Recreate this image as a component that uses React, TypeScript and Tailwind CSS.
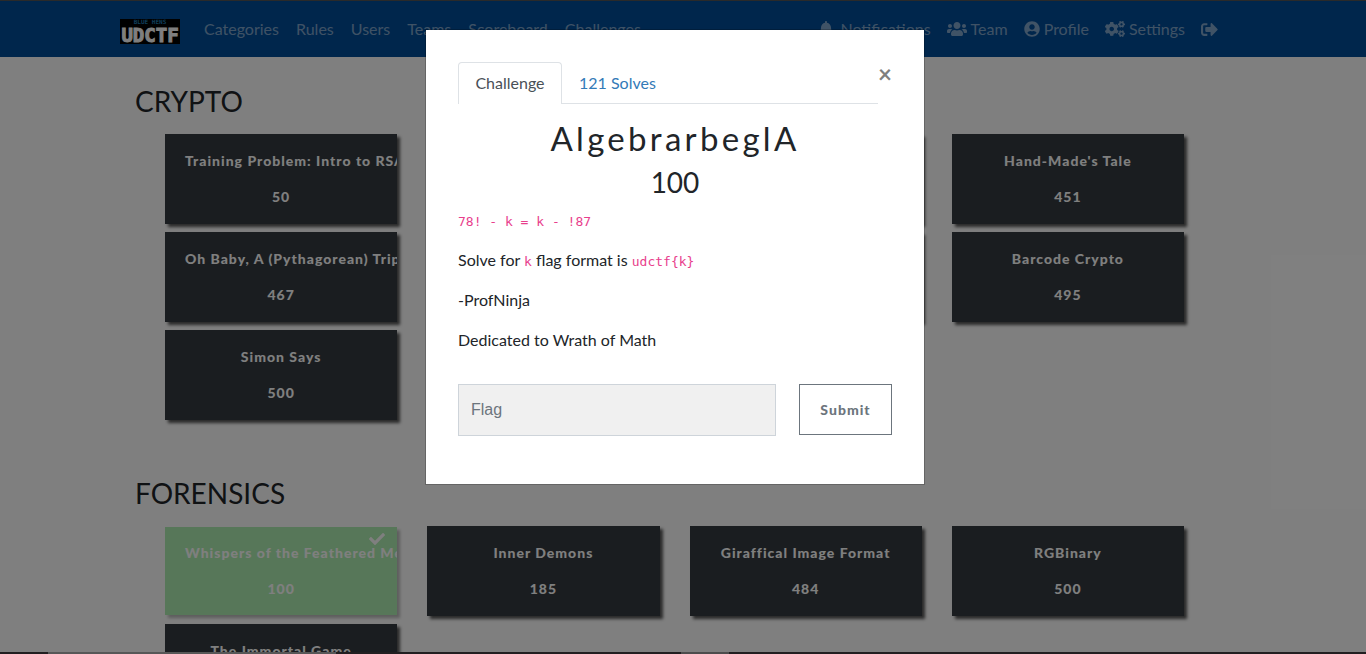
import { FaBell, FaCheck, FaCogs, FaSignOutAlt, FaUserCircle, FaUsers } from "react-icons/fa";

type Challenge = { name?: string; value?: number; solved?: boolean; blank?: boolean };

const crypto: Challenge[] = [
  { name: "Training Problem: Intro to RSA", value: 50 },
  { blank: true },
  { blank: true },
  { name: "Hand-Made's Tale", value: 451 },
  { name: "Oh Baby, A (Pythagorean) Triplet", value: 467 },
  { blank: true },
  { blank: true },
  { name: "Barcode Crypto", value: 495 },
  { name: "Simon Says", value: 500 },
];

const forensics: Challenge[] = [
  { name: "Whispers of the Feathered Messenger", value: 100, solved: true },
  { name: "Inner Demons", value: 185 },
  { name: "Giraffical Image Format", value: 484 },
  { name: "RGBinary", value: 500 },
  { name: "The Immortal Game", value: 500 },
];

function Card({ name, value, solved, blank }: Challenge) {
  if (blank) {
    return <div aria-hidden="true" className="h-[90px] bg-[#343a40] shadow-[3px_3px_3px_#555]" />;
  }
  return (
    <button
      type="button"
      className={
        solved
          ? "relative my-px h-[88px] overflow-hidden bg-[#afefb2] px-5 text-center text-sm font-black tracking-[1px] text-white shadow-[3px_3px_3px_#bbb]"
          : "relative h-[90px] overflow-hidden bg-[#343a40] px-5 text-center text-sm font-black tracking-[1px] text-white shadow-[3px_3px_3px_#555]"
      }
    >
      {solved && <FaCheck className="absolute top-1 right-3 size-4" />}
      <p className="mb-4 whitespace-nowrap">{name}</p>
      <p>{value}</p>
    </button>
  );
}

function Category({ title, items }: { title: string; items: Challenge[] }) {
  return (
    <section className="px-[15px]">
      <h3 className="mb-4 text-[28px] leading-[34px] text-[#212529]">{title}</h3>
      <div className="grid grid-cols-4 gap-x-[30px] gap-y-2 pr-[31px] pl-[30px]">
        {items.map((c, i) => (
          <Card key={i} {...c} />
        ))}
      </div>
    </section>
  );
}

const link = "flex items-center gap-1 whitespace-nowrap";
const code = "font-['DejaVu_Sans_Mono',monospace] text-[13px] leading-none text-[#e83e8c]";

export default function App() {
  return (
    <div className="relative h-screen overflow-hidden bg-white font-['Lato',sans-serif] text-base text-[#212529]">
      <div className="pr-4">
        <header className="-mr-4 border-t border-[#555] bg-[#004c98] pr-4">
          <nav className="mx-auto flex h-14 max-w-[1140px] items-center px-[15px] text-white/50">
            <a href="#home" className="mt-1 mr-6">
              <svg width="60" height="25" viewBox="0 0 60 25" role="img" aria-label="Blue Hens UDCTF">
                <rect width="60" height="25" fill="#000" />
                <text x="30" y="5" textAnchor="middle" fontSize="6" fontWeight="700" fontFamily="DejaVu Sans Mono" fill="#1f7ab0">BLUE HENS</text>
                <text x="30" y="23" textAnchor="middle" fontSize="19" fontWeight="700" fontFamily="DejaVu Sans Mono" fill="#fff" stroke="#fff" strokeWidth="1">UDCTF</text>
              </svg>
            </a>
            <div className="flex gap-[17px]">
              <a href="#categories" className={link}>Categories</a>
              <a href="#rules" className={link}>Rules</a>
              <a href="#users" className={link}>Users</a>
              <a href="#teams" className={link}>Teams</a>
              <a href="#scoreboard" className={link}>Scoreboard</a>
              <a href="#challenges" className={link}>Challenges</a>
            </div>
            <div className="mr-3 ml-auto flex gap-4">
              <a href="#notifications" className={link}><FaBell className="mr-0.5" />Notifications</a>
              <a href="#team" className={link}><FaUsers className="size-5" />Team</a>
              <a href="#profile" className={link}><FaUserCircle />Profile</a>
              <a href="#settings" className={link}><FaCogs className="size-5" />Settings</a>
              <a href="#logout" aria-label="Log out" className={link}><FaSignOutAlt className="size-[17px]" /></a>
            </div>
          </nav>
        </header>
        <main className="mx-auto flex max-w-[1140px] flex-col gap-14 px-[15px] pt-[27px]">
          <Category title="CRYPTO" items={crypto} />
          <Category title="FORENSICS" items={forensics} />
        </main>
      </div>

      <div className="absolute inset-0 flex items-start justify-center bg-black/50 pt-[29px] pr-4">
        <div role="dialog" aria-modal="true" aria-labelledby="challenge-title" className="w-full max-w-[500px] border border-black/20 bg-white bg-clip-padding px-8 pt-8 pb-12">
          <div className="flex items-start justify-between">
            <div role="tablist" className="flex flex-1 border-b border-[#dee2e6]">
              <button role="tab" type="button" aria-selected="true" className="-mb-px h-[42px] w-[104px] rounded-t border border-b-0 border-[#dee2e6] bg-white pb-0.5 text-[#495057]">Challenge</button>
              <button role="tab" type="button" aria-selected="false" className="h-[41px] px-[17px] text-[#337ab7]">121 Solves</button>
            </div>
            <button type="button" aria-label="Close" className="w-3.5 text-2xl leading-6 font-bold text-[#7f7f7f]">×</button>
          </div>
          <h2 id="challenge-title" className="mt-3.5 text-center text-[33px] leading-10 tracking-widest">AlgebrarbeglA</h2>
          <h3 className="mt-1 text-center text-[28px] leading-10">100</h3>
          <div className="mt-1.5 flex flex-col gap-4">
            <p className="h-6 leading-6"><code className={code}>78! - k = k - !87</code></p>
            <p className="h-6 leading-6">
              Solve for <code className={code}>k</code> flag format is{" "}
              <code className={code}>udctf{"{k}"}</code>
            </p>
            <p className="h-6 leading-6">-ProfNinja</p>
            <p className="h-6 leading-6">Dedicated to Wrath of Math</p>
          </div>
          <form className="mt-8 flex items-start gap-[23px]" onSubmit={(e) => e.preventDefault()}>
            <input aria-label="Flag" placeholder="Flag" className="h-[52px] min-w-0 flex-1 border border-[#ced4da] bg-[#f0f0f0] px-3 font-['Liberation_Sans',sans-serif] placeholder:text-[#6c757d]" />
            <button type="submit" className="h-[51px] w-[93px] border border-[#6c757d] text-sm font-black tracking-[1px] text-[#6c757d]">Submit</button>
          </form>
        </div>
      </div>
      <div aria-hidden="true" className="absolute inset-x-0 bottom-0 flex h-0.5 bg-[#221f21]">
        <span className="ml-12 w-[288px] bg-[#575757]" />
        <span className="ml-[345px] w-12 bg-[#4d4d4d]" />
      </div>
    </div>
  );
}
